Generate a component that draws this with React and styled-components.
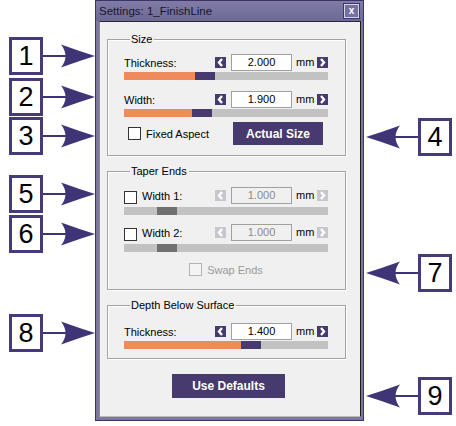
import React from "react";
import styled, { createGlobalStyle } from "styled-components";

const GlobalStyle = createGlobalStyle`
  html, body {
    margin: 0;
    padding: 0;
    background: #ffffff;
  }
  body {
    font-family: "Liberation Sans", Arial, sans-serif;
    font-size: 11px;
    color: #000;
  }
`;

const PURPLE = "#463a6e";
const ORANGE = "#ef8a5c";
const TRACK = "#c2c2c2";

const Page = styled.div`
  position: relative;
  width: 456px;
  height: 426px;
  display: flex;
  overflow: hidden;
`;

/* ---- callouts (annotation pins on the screenshot) ---- */

const Pin = styled.div`
  position: absolute;
  top: ${p => p.$top}px;
  left: ${p => (p.$side === "left" ? "9px" : "366px")};
  display: flex;
  align-items: center;
`;

const NumBox = styled.div`
  width: 34px;
  height: 38px;
  box-sizing: border-box;
  border: 3px solid #463a78;
  background: #fff;
  display: flex;
  align-items: center;
  justify-content: center;
  font-family: "Liberation Sans", Arial, sans-serif;
  font-size: 27px;
  line-height: 1;
  color: #000;
`;

const ArrowSvg = styled.svg`
  display: block;
  transform: ${p => (p.$flip ? "scaleX(-1)" : "none")};
`;

const Arrow = ({ flip }) => (
  <ArrowSvg $flip={flip} width="52" height="24" viewBox="0 0 52 24">
    <line x1="0" y1="12" x2="26" y2="12" stroke="#3f3476" strokeWidth="2" />
    <path d="M18 0.5 Q36 7 52 12 Q36 17 18 23.5 Q27 12 18 0.5 Z" fill="#3f3476" />
  </ArrowSvg>
);

const Callout = ({ side, top, n }) => (
  <Pin $side={side} $top={top}>
    {side === "right" && <Arrow flip />}
    <NumBox>{n}</NumBox>
    {side === "left" && <Arrow />}
  </Pin>
);

/* ---- window chrome ---- */

const Window = styled.div`
  margin-left: 95px;
  width: 269px;
  height: 421px;
  box-sizing: border-box;
  display: flex;
  flex-direction: column;
  background: #7b77a1;
  border: 1px solid #3b3467;
  padding: 0 2px 3px 3px;
`;

const TitleBar = styled.div`
  height: 20px;
  margin: 0 -2px 0 -3px;
  padding: 0 4px 0 3px;
  display: flex;
  align-items: center;
  justify-content: space-between;
  background: linear-gradient(#807ca7, #6d6996);
  color: #17152f;
  font-size: 11.5px;
`;

const CloseButton = styled.div`
  width: 13px;
  height: 12px;
  border: 1px solid #d6d4e4;
  box-shadow: 0 0 0 1px #3e3866;
  background: #7470a0;
  color: #fff;
  font-weight: bold;
  font-size: 10px;
  line-height: 11px;
  text-align: center;
`;

const Panel = styled.div`
  flex: 1;
  background: #f0f0f0;
  border: 1px solid;
  border-color: #2a2a2a #1a1a1a #bdbdbd #8e8e8e;
  padding: 17px 14px 0 7px;
  display: flex;
  flex-direction: column;
`;

/* ---- group boxes ---- */

const Group = styled.div`
  width: 239px;
  box-sizing: border-box;
  border: 1px solid #a3a3a3;
  box-shadow: 1px 1px 0 #fff, inset 1px 1px 0 #fff;
  padding: 0 17px ${p => p.$pb}px 16px;
  margin-bottom: 15px;
`;

const Legend = styled.div`
  width: fit-content;
  height: 13px;
  line-height: 13px;
  margin: -7px 0 0 6px;
  padding: 0 2px 0 1px;
  background: #f0f0f0;
  color: #000;
`;

const Body = styled.div`
  padding-top: ${p => p.$pt}px;
  display: flex;
  flex-direction: column;
  gap: ${p => p.$gap || 0}px;
`;

const Field = styled.div`
  display: flex;
  flex-direction: column;
`;

const ControlRow = styled.div`
  height: 17px;
  display: flex;
  align-items: ${p => (p.$top ? "flex-start" : "center")};
`;

const Label = styled.label`
  flex: ${p => (p.$fixed ? "none" : "1")};
  display: flex;
  align-items: center;
  gap: 5px;
  color: ${p => (p.$muted ? "#9a9a9a" : "#000")};
  white-space: nowrap;
`;

const Check = styled.span`
  width: 13px;
  height: 13px;
  box-sizing: border-box;
  flex: none;
  margin-top: ${p => p.$mt || 0}px;
  border: 1px solid ${p => (p.$muted ? "#b4b4b4" : "#333")};
  background: ${p => (p.$muted ? "#f4f4f4" : "#fff")};
`;

const Spin = styled.div`
  width: 11px;
  height: 11px;
  flex: none;
  margin-top: ${p => p.$mt || 0}px;
  background: ${p => (p.$off ? "#c7c6cf" : PURPLE)};
  display: flex;
  align-items: center;
  justify-content: center;
`;

const Input = styled.div`
  width: 61px;
  height: 17px;
  box-sizing: border-box;
  flex: none;
  margin-left: 5px;
  border: 1px solid #a0a0a0;
  background: ${p => (p.$off ? "#f0f0f0" : "#fff")};
  color: ${p => (p.$off ? "#8a8a8a" : "#000")};
  text-align: center;
  line-height: 15px;
`;

const Unit = styled.span`
  width: 25px;
  flex: none;
  padding-left: 4px;
  box-sizing: border-box;
  line-height: 17px;
`;

const Track = styled.div`
  height: 8px;
  margin-top: ${p => p.$mt}px;
  display: flex;
  background: ${TRACK};
`;

const Fill = styled.div`
  width: ${p => p.$w}px;
  background: ${p => (p.$off ? "transparent" : ORANGE)};
`;

const Thumb = styled.div`
  width: 20px;
  background: ${p => (p.$off ? "#707070" : PURPLE)};
`;

const ActionRow = styled.div`
  display: flex;
  align-items: center;
  justify-content: ${p => (p.$center ? "center" : "space-between")};
  padding: ${p => p.$pad || "0"};
`;

const PurpleButton = styled.div`
  width: ${p => p.$w}px;
  height: ${p => p.$h}px;
  background: ${PURPLE};
  color: #fff;
  font-weight: bold;
  font-size: 12px;
  display: flex;
  align-items: center;
  justify-content: center;
`;

const Footer = styled.div`
  margin: 0 -7px 0 -3px;
  display: flex;
  justify-content: center;
`;

const Chevron = ({ dir }) => (
  <svg width="11" height="11" viewBox="0 0 11 11">
    <polyline
      points={dir === "left" ? "7,2 4,5.5 7,9" : "4,2 7,5.5 4,9"}
      fill="none"
      stroke="#fff"
      strokeWidth="2.4"
    />
  </svg>
);

const Spinner = ({ value, off, mt }) => (
  <>
    <Spin $off={off} $mt={mt}><Chevron dir="left" /></Spin>
    <Input $off={off}>{value}</Input>
    <Unit>mm</Unit>
    <Spin $off={off} $mt={mt}><Chevron dir="right" /></Spin>
  </>
);

const App = () => (
  <Page>
    <GlobalStyle />

    <Window>
      <TitleBar>
        <span>Settings: 1_FinishLine</span>
        <CloseButton>x</CloseButton>
      </TitleBar>

      <Panel>
        <Group $pb={10}>
          <Legend>Size</Legend>
          <Body $pt={8} $gap={11}>
            <Field>
              <ControlRow>
                <Label>Thickness:</Label>
                <Spinner value="2.000" />
              </ControlRow>
              <Track $mt={1}><Fill $w={71} /><Thumb /></Track>
            </Field>
            <Field>
              <ControlRow>
                <Label>Width:</Label>
                <Spinner value="1.900" />
              </ControlRow>
              <Track $mt={1}><Fill $w={68} /><Thumb /></Track>
            </Field>
          </Body>
          <ActionRow $pad="5px 5px 0 4px">
            <Label><Check />Fixed Aspect</Label>
            <PurpleButton $w={90} $h={23}>Actual Size</PurpleButton>
          </ActionRow>
        </Group>

        <Group $pb={13}>
          <Legend>Taper Ends</Legend>
          <Body $pt={9} $gap={9}>
            <Field>
              <ControlRow $top>
                <Label><Check $mt={4} />Width 1:</Label>
                <Spinner value="1.000" off mt={3} />
              </ControlRow>
              <Track $mt={3}><Fill $w={33} $off /><Thumb $off /></Track>
            </Field>
            <Field>
              <ControlRow $top>
                <Label><Check $mt={4} />Width 2:</Label>
                <Spinner value="1.000" off mt={3} />
              </ControlRow>
              <Track $mt={3}><Fill $w={33} $off /><Thumb $off /></Track>
            </Field>
          </Body>
          <ActionRow $center $pad="11px 0 0 0">
            <Label as="span" $muted $fixed>
              <Check $muted />Swap Ends
            </Label>
          </ActionRow>
        </Group>

        <Group $pb={9}>
          <Legend>Depth Below Surface</Legend>
          <Body $pt={11}>
            <Field>
              <ControlRow>
                <Label>Thickness:</Label>
                <Spinner value="1.400" />
              </ControlRow>
              <Track $mt={1}><Fill $w={117} /><Thumb /></Track>
            </Field>
          </Body>
        </Group>

        <Footer>
          <PurpleButton $w={113} $h={24}>Use Defaults</PurpleButton>
        </Footer>
      </Panel>
    </Window>

    <Callout side="left" top={37} n="1" />
    <Callout side="left" top={78} n="2" />
    <Callout side="left" top={117} n="3" />
    <Callout side="left" top={175} n="5" />
    <Callout side="left" top={215} n="6" />
    <Callout side="left" top={314} n="8" />
    <Callout side="right" top={118} n="4" />
    <Callout side="right" top={254} n="7" />
    <Callout side="right" top={377} n="9" />
  </Page>
);

export default App;
